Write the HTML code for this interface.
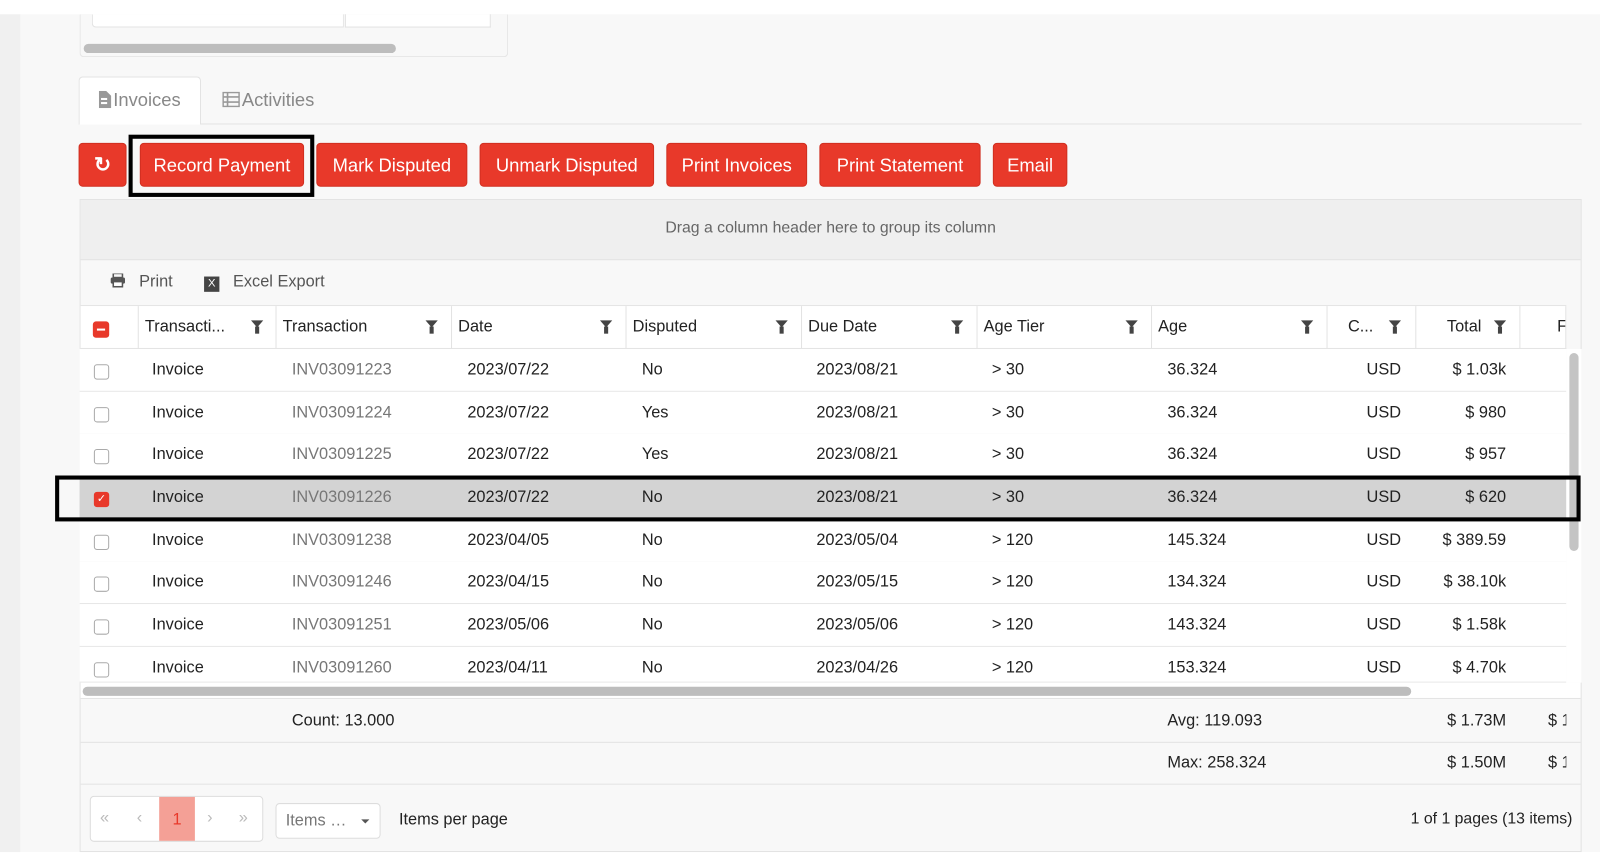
<!DOCTYPE html>
<html><head><style>
*{box-sizing:border-box;margin:0;padding:0}
body{width:1600px;height:860px;position:relative;background:#fff;font-family:"Liberation Sans",sans-serif;color:#222;overflow:hidden;white-space:nowrap}
#w{position:absolute;left:0;top:0;width:1568px;height:843px;transform:scale(1.0204);transform-origin:0 0}
.a{position:absolute}
.btn{position:absolute;top:140px;height:43px;background:#e8392a;color:#fff;border-radius:4px;font-size:18px;line-height:43px;text-align:center;border:1px solid #d02f20}
.row{position:absolute;left:78px;width:1457px;height:42px;background:#fff;border-bottom:1px solid #e6e6e6;font-size:16px}
.row span{position:absolute;top:12px}
.cb{position:absolute;left:14px;top:15px;width:15px;height:15px;border:1px solid #aaa;border-radius:3px;background:#fff}
.hd{position:absolute;top:300px;height:42px;border-right:1px solid #e3e3e3;font-size:16px;line-height:42px;padding-left:6px}
.f{position:absolute;top:14px;width:0;height:0;border-left:6px solid transparent;border-right:6px solid transparent;border-top:7px solid #444}
.f:after{content:"";position:absolute;left:-2px;top:-1px;width:4px;height:7px;background:#444}
</style></head><body><div id="w">
<div class="a" style="left:0;top:14px;width:20px;height:821px;background:#f0f0f0"></div>
<div class="a" style="left:20px;top:14px;width:1548px;height:821px;background:#f8f8f8"></div>
<div class="a" style="left:78px;top:14px;width:420px;height:42px;border:1px solid #e6e6e6;border-top:none;border-radius:0 0 4px 4px;background:#f8f8f8"></div>
<div class="a" style="left:90px;top:14px;width:247px;height:13px;background:#fff;border:1px solid #e3e3e3;border-top:none;border-radius:0 0 0 4px"></div>
<div class="a" style="left:338px;top:14px;width:143px;height:13px;background:#fff;border:1px solid #e3e3e3;border-top:none"></div>
<div class="a" style="left:82px;top:43px;width:306px;height:9px;background:#bdbdbd;border-radius:5px"></div>
<div class="a" style="left:78px;top:121px;width:1472px;height:1px;background:#e3e3e3"></div>
<div class="a" style="left:77px;top:75px;width:120px;height:47px;background:#fff;border:1px solid #e3e3e3;border-bottom:none;border-radius:4px 4px 0 0"></div>
<div class="a" style="left:96px;top:88px;font-size:18px;color:#888">
<svg width="13" height="17" viewBox="0 0 13 17" style="vertical-align:-2px;margin-right:2px"><path d="M1 0h7l5 5v12H1z" fill="#999"/><rect x="3" y="7" width="6" height="2" fill="#fff"/><rect x="3" y="11" width="6" height="2" fill="#fff"/></svg>Invoices</div>
<div class="a" style="left:218px;top:88px;font-size:18px;color:#888">
<svg width="17" height="15" viewBox="0 0 17 15" style="vertical-align:-1px;margin-right:2px"><rect x="0.5" y="0.5" width="16" height="14" fill="none" stroke="#999" stroke-width="1.8"/><path d="M1 5h15M1 10h15M5 1v13" stroke="#999" stroke-width="1.6"/></svg>Activities</div>
<div class="btn" style="left:77px;width:47px;font-size:20px;font-weight:bold">&#x21bb;</div>
<div class="a" style="left:126px;top:132px;width:182px;height:61px;border:4px solid #000"></div>
<div class="btn" style="left:137px;width:161px">Record Payment</div>
<div class="btn" style="left:310px;width:148px">Mark Disputed</div>
<div class="btn" style="left:470px;width:171px">Unmark Disputed</div>
<div class="btn" style="left:653px;width:138px">Print Invoices</div>
<div class="btn" style="left:803px;width:158px">Print Statement</div>
<div class="btn" style="left:973px;width:73px">Email</div>
<div class="a" style="left:78px;top:195px;width:1472px;height:640px;border:1px solid #e3e3e3;background:#f8f8f8"></div>
<div class="a" style="left:79px;top:196px;width:1470px;height:59px;background:#efefef;border-bottom:1px solid #e3e3e3;text-align:center;line-height:56px;font-size:15.5px;color:#666">Drag a column header here to group its column</div>
<div class="a" style="left:108px;top:268px;font-size:16px;color:#555"><svg width="15" height="14" viewBox="0 0 15 14" style="vertical-align:-1px"><rect x="3" y="0" width="9" height="4" fill="none" stroke="#555" stroke-width="1.5"/><rect x="0.5" y="4" width="14" height="6" rx="1.5" fill="#555"/><rect x="3" y="8" width="9" height="5" fill="#fff" stroke="#555" stroke-width="1.5"/></svg>&nbsp;&nbsp; Print</div>
<div class="a" style="left:200px;top:268px;font-size:16px;color:#555"><span style="display:inline-block;width:15px;height:15px;background:#444;color:#fff;font-size:11px;text-align:center;line-height:15px;vertical-align:0">X</span>&nbsp;&nbsp; Excel Export</div>
<div class="a" style="left:79px;top:299px;width:1456px;height:1px;background:#e3e3e3"></div>
<div class="a" style="left:79px;top:300px;width:1456px;height:42px;background:#fff;border-bottom:1px solid #e3e3e3"></div>
<div class="a" style="left:91px;top:315px;width:16px;height:16px;background:#e8392a;border-radius:3px"><div style="position:absolute;left:4px;top:7px;width:8px;height:2px;background:#fff"></div></div>
<div class="hd" style="left:135px;width:136px;border-left:1px solid #e3e3e3">Transacti...<i class="f" style="left:110px"></i></div>
<div class="hd" style="left:271px;width:172px">Transaction<i class="f" style="left:146px"></i></div>
<div class="hd" style="left:443px;width:171px">Date<i class="f" style="left:145px"></i></div>
<div class="hd" style="left:614px;width:172px">Disputed<i class="f" style="left:146px"></i></div>
<div class="hd" style="left:786px;width:172px">Due Date<i class="f" style="left:146px"></i></div>
<div class="hd" style="left:958px;width:171px">Age Tier<i class="f" style="left:145px"></i></div>
<div class="hd" style="left:1129px;width:172px">Age<i class="f" style="left:146px"></i></div>
<div class="hd" style="left:1301px;width:87px;padding-left:20px">C...<i class="f" style="left:60px"></i></div>
<div class="hd" style="left:1388px;width:102px;padding-left:30px">Total<i class="f" style="left:76px"></i></div>
<div class="hd" style="left:1490px;width:45px;padding-left:36px;overflow:hidden">F</div>

<div class="row" style="top:342px"><i class="cb"></i><span style="left:71px">Invoice</span><span style="left:208px;color:#777">INV03091223</span><span style="left:380px">2023/07/22</span><span style="left:551px">No</span><span style="left:722px">2023/08/21</span><span style="left:894px">&gt; 30</span><span style="left:1066px">36.324</span><span style="right:162px">USD</span><span style="right:59px">$ 1.03k</span></div>
<div class="row" style="top:384px"><i class="cb"></i><span style="left:71px">Invoice</span><span style="left:208px;color:#777">INV03091224</span><span style="left:380px">2023/07/22</span><span style="left:551px">Yes</span><span style="left:722px">2023/08/21</span><span style="left:894px">&gt; 30</span><span style="left:1066px">36.324</span><span style="right:162px">USD</span><span style="right:59px">$ 980</span></div>
<div class="row" style="top:425px"><i class="cb"></i><span style="left:71px">Invoice</span><span style="left:208px;color:#777">INV03091225</span><span style="left:380px">2023/07/22</span><span style="left:551px">Yes</span><span style="left:722px">2023/08/21</span><span style="left:894px">&gt; 30</span><span style="left:1066px">36.324</span><span style="right:162px">USD</span><span style="right:59px">$ 957</span></div>
<div class="row" style="top:467px;background:#d3d3d3"><i class="cb" style="background:#e8392a;border-color:#e8392a;color:#fff;font-size:11px;line-height:13px;text-align:center;font-style:normal">✓</i><span style="left:71px">Invoice</span><span style="left:208px;color:#777">INV03091226</span><span style="left:380px">2023/07/22</span><span style="left:551px">No</span><span style="left:722px">2023/08/21</span><span style="left:894px">&gt; 30</span><span style="left:1066px">36.324</span><span style="right:162px">USD</span><span style="right:59px">$ 620</span></div>
<div class="row" style="top:509px"><i class="cb"></i><span style="left:71px">Invoice</span><span style="left:208px;color:#777">INV03091238</span><span style="left:380px">2023/04/05</span><span style="left:551px">No</span><span style="left:722px">2023/05/04</span><span style="left:894px">&gt; 120</span><span style="left:1066px">145.324</span><span style="right:162px">USD</span><span style="right:59px">$ 389.59</span></div>
<div class="row" style="top:550px"><i class="cb"></i><span style="left:71px">Invoice</span><span style="left:208px;color:#777">INV03091246</span><span style="left:380px">2023/04/15</span><span style="left:551px">No</span><span style="left:722px">2023/05/15</span><span style="left:894px">&gt; 120</span><span style="left:1066px">134.324</span><span style="right:162px">USD</span><span style="right:59px">$ 38.10k</span></div>
<div class="row" style="top:592px"><i class="cb"></i><span style="left:71px">Invoice</span><span style="left:208px;color:#777">INV03091251</span><span style="left:380px">2023/05/06</span><span style="left:551px">No</span><span style="left:722px">2023/05/06</span><span style="left:894px">&gt; 120</span><span style="left:1066px">143.324</span><span style="right:162px">USD</span><span style="right:59px">$ 1.58k</span></div>
<div class="row" style="top:634px;height:35px"><i class="cb"></i><span style="left:71px">Invoice</span><span style="left:208px;color:#777">INV03091260</span><span style="left:380px">2023/04/11</span><span style="left:551px">No</span><span style="left:722px">2023/04/26</span><span style="left:894px">&gt; 120</span><span style="left:1066px">153.324</span><span style="right:162px">USD</span><span style="right:59px">$ 4.70k</span></div>
<div class="a" style="left:1535px;top:342px;width:15px;height:327px;background:#fff"></div>
<div class="a" style="left:1538px;top:346px;width:9px;height:194px;background:#c4c4c4;border-radius:5px"></div>
<div class="a" style="left:54px;top:466px;width:1495px;height:45px;border:4px solid #000"></div>
<div class="a" style="left:79px;top:669px;width:1470px;height:16px;background:#fff;border-bottom:1px solid #e3e3e3"></div>
<div class="a" style="left:81px;top:673px;width:1302px;height:9px;background:#bdbdbd;border-radius:5px"></div>
<div class="a" style="left:79px;top:727px;width:1470px;height:1px;background:#e3e3e3"></div>
<div class="a" style="left:79px;top:768px;width:1470px;height:1px;background:#e3e3e3"></div>
<div class="a" style="left:286px;top:698px;font-size:16px">Count: 13.000</div>
<div class="a" style="left:1144px;top:698px;font-size:16px">Avg: 119.093</div>
<div class="a" style="right:92px;top:698px;font-size:16px">$ 1.73M</div>
<div class="a" style="left:1517px;top:698px;font-size:16px;width:18px;overflow:hidden">$ 1</div>
<div class="a" style="left:1144px;top:739px;font-size:16px">Max: 258.324</div>
<div class="a" style="right:92px;top:739px;font-size:16px">$ 1.50M</div>
<div class="a" style="left:1517px;top:739px;font-size:16px;width:18px;overflow:hidden">$ 1</div>
<div class="a" style="left:88px;top:780px;width:170px;height:45px;border:1px solid #ddd;border-radius:4px;background:#fff;font-size:16px;color:#bbb">
<span class="a" style="left:9px;top:12px">«</span><span class="a" style="left:45px;top:12px">‹</span>
<div class="a" style="left:67px;top:0;width:35px;height:43px;background:#f4a096;color:#e8392a;text-align:center;line-height:45px">1</div>
<span class="a" style="left:114px;top:12px">›</span><span class="a" style="left:145px;top:12px">»</span></div>
<div class="a" style="left:270px;top:787px;width:103px;height:35px;border:1px solid #ddd;border-radius:4px;background:#fff;font-size:16px;color:#777;line-height:34px;padding-left:9px">Items …<span style="position:absolute;right:10px;top:15px;border-left:4px solid transparent;border-right:4px solid transparent;border-top:4px solid #555"></span></div>
<div class="a" style="left:391px;top:795px;font-size:16px">Items per page</div>
<div class="a" style="right:27px;top:794px;font-size:15.5px">1 of 1 pages (13 items)</div>
</div></body></html>
